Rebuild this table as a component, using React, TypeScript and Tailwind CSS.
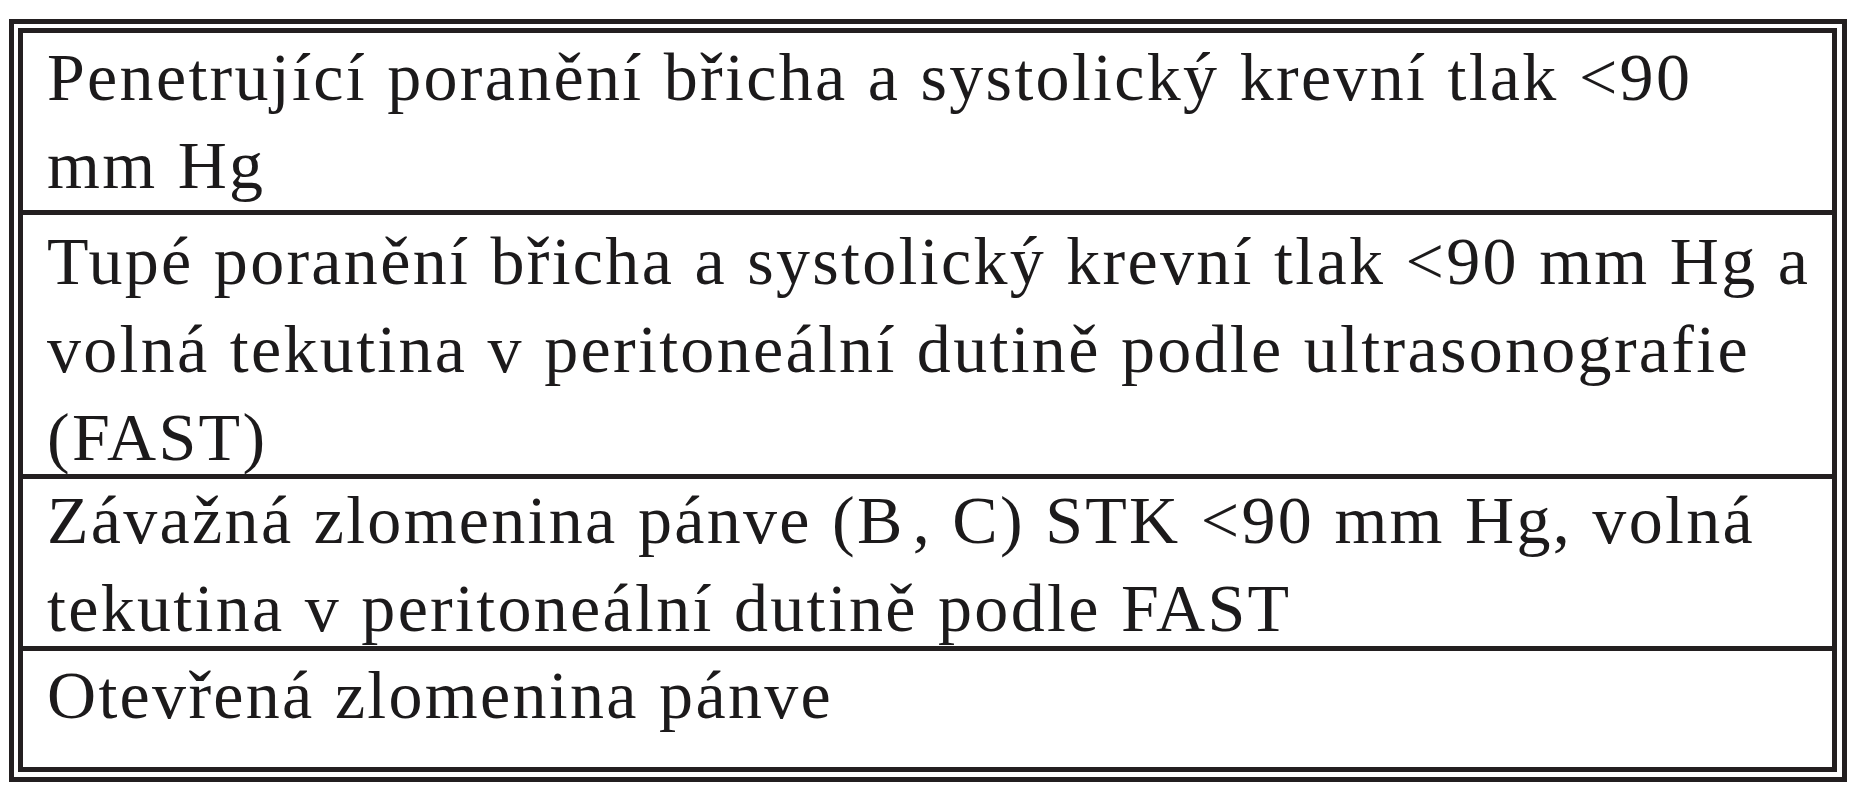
import React from "react";

const rows: { lines: React.ReactNode[]; h: string; pt: string }[] = [
  {
    lines: ["Penetrující poranění břicha a systolický krevní tlak <90", "mm Hg"],
    h: "h-[177px]",
    pt: "pt-0",
  },
  {
    lines: [
      "Tupé poranění břicha a systolický krevní tlak <90 mm Hg a",
      "volná tekutina v peritoneální dutině podle ultrasonografie",
      "(FAST)",
    ],
    h: "h-[264px]",
    pt: "pt-[2px]",
  },
  {
    lines: [
      <>
        Závažná zlomenina pánve (B<span className="ml-[8px]">,</span> C) STK &lt;90 mm Hg, volná
      </>,
      "tekutina v peritoneální dutině podle FAST",
    ],
    h: "h-[172px]",
    pt: "-mt-[3px]",
  },
  {
    lines: ["Otevřená zlomenina pánve"],
    h: "h-[106px]",
    pt: "pt-0",
  },
];

export default function App() {
  return (
    <div className="w-[1870px] h-[800px] bg-white pt-[19px] pl-[9px]">
      <div className="w-[1838px] h-[763px] border-[5px] border-[#231f20] p-[4px] pr-[5px] pb-[5px]">
        <div className="h-full border-[5px] border-[#231f20] flex flex-col">
          {rows.map((r, i) => (
            <div
              key={i}
              className={`${r.h} shrink-0 overflow-hidden ${i > 0 ? "border-t-[5px] border-[#231f20]" : ""}`}
            >
              <div
                className={`${r.pt} pl-[24px] text-[68px] leading-[88px] tracking-[2.3px] [word-spacing:1px] text-[#1c1a1b] whitespace-nowrap`}
                style={{ fontFamily: '"Liberation Serif", "Times New Roman", serif' }}
              >
                {r.lines.map((l, j) => (
                  <div key={j}>{l}</div>
                ))}
              </div>
            </div>
          ))}
        </div>
      </div>
    </div>
  );
}
